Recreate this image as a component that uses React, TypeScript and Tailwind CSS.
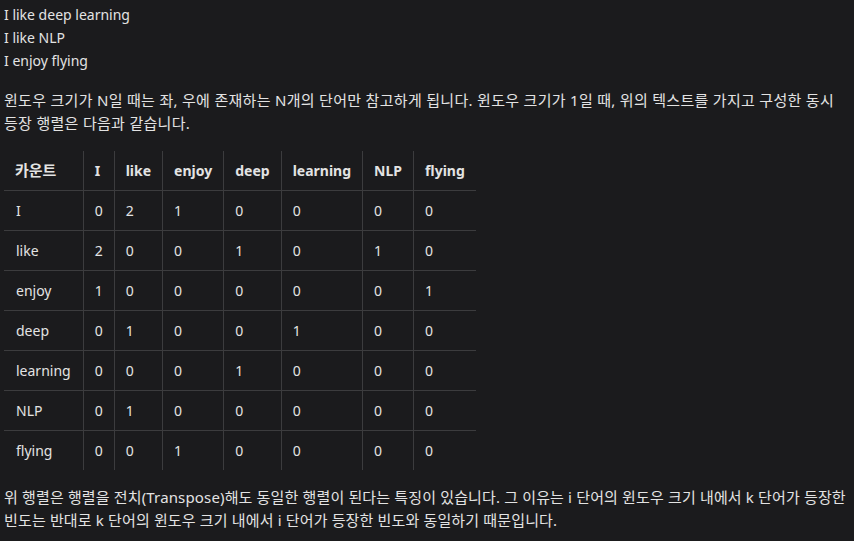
const headers = ["카운트", "I", "like", "enjoy", "deep", "learning", "NLP", "flying"];

const rows: [string, number[]][] = [
  ["I", [0, 2, 1, 0, 0, 0, 0]],
  ["like", [2, 0, 0, 1, 0, 1, 0]],
  ["enjoy", [1, 0, 0, 0, 0, 0, 1]],
  ["deep", [0, 1, 0, 0, 1, 0, 0]],
  ["learning", [0, 0, 0, 1, 0, 0, 0]],
  ["NLP", [0, 1, 0, 0, 0, 0, 0]],
  ["flying", [0, 0, 1, 0, 0, 0, 0]],
];

export default function App() {
  return (
    <div
      className="w-[854px] h-[541px] overflow-hidden bg-[#1b1b1d] text-[#e3e3e3] text-[14px] leading-[23px] px-1 pt-[3px]"
      style={{ fontFamily: '"Noto Sans", "Noto Sans CJK KR", sans-serif' }}
    >
      {/* Sample sentences */}
      <div>
        <p>I like deep learning</p>
        <p>I like NLP</p>
        <p>I enjoy flying</p>
      </div>

      <p className="mt-[17px] whitespace-nowrap text-[15px] tracking-[0.3px]">
        윈도우 크기가 N일 때는 좌, 우에 존재하는 N개의 단어만 참고하게 됩니다. 윈도우 크기가 1일 때, 위의 텍스트를 가지고 구성한 동시
        <br />
        등장 행렬은 다음과 같습니다.
      </p>

      {/* Co-occurrence matrix */}
      <table className="mt-[16px] border-collapse">
        <thead>
          <tr className="h-[39px]">
            {headers.map((h, i) => (
              <th
                key={h}
                className={`px-[11px] text-left font-bold ${i > 0 ? "border-l border-[#3c3c3e]" : "text-[15px]"}`}
              >
                {h}
              </th>
            ))}
          </tr>
        </thead>
        <tbody>
          {rows.map(([name, vals]) => (
            <tr key={name} className="h-10 border-t border-[#3c3c3e]">
              <td className="px-3">{name}</td>
              {vals.map((v, j) => (
                <td key={j} className="px-[11px] border-l border-[#3c3c3e]">
                  {v}
                </td>
              ))}
            </tr>
          ))}
        </tbody>
      </table>

      <p className="mt-[16px] whitespace-nowrap text-[15px] tracking-[0.15px]">
        위 행렬은 행렬을 전치(Transpose)해도 동일한 행렬이 된다는 특징이 있습니다. 그 이유는 i 단어의 윈도우 크기 내에서 k 단어가 등장한
        <br />
        빈도는 반대로 k 단어의 윈도우 크기 내에서 i 단어가 등장한 빈도와 동일하기 때문입니다.
      </p>
    </div>
  );
}
